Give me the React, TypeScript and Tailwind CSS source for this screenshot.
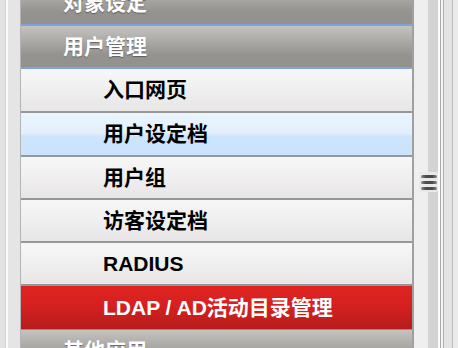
import React from 'react'

type Item = {
  label: string
  kind: 'header' | 'item' | 'active' | 'current'
  h: string
}

// heights include the bottom border (border-box)
const items: Item[] = [
  { label: '对象设定', kind: 'header', h: 'h-[44px]' },
  { label: '用户管理', kind: 'header', h: 'h-[43px]' },
  { label: '入口网页', kind: 'item', h: 'h-[44px]' },
  { label: '用户设定档', kind: 'current', h: 'h-[44px]' },
  { label: '用户组', kind: 'item', h: 'h-[43px]' },
  { label: '访客设定档', kind: 'item', h: 'h-[43px]' },
  { label: 'RADIUS', kind: 'item', h: 'h-[43px]' },
  { label: 'LDAP / AD活动目录管理', kind: 'active', h: 'h-[44px]' },
  { label: '其他应用', kind: 'header', h: 'h-[44px]' },
]

const font = { fontFamily: '"Liberation Sans", "Noto Sans CJK SC", sans-serif' }

function Row({ item }: { item: Item }) {
  if (item.kind === 'header') {
    return (
      <div
        className={`${item.h} flex shrink-0 items-center border-b-2 border-[#7fa2e4] bg-[linear-gradient(to_bottom,#c5c3c0,#a3a19e_50%,#959390_70%,#93918e)] pl-[42px] text-[21px] font-bold text-white [text-shadow:0_1px_1px_rgba(60,60,60,0.6)]`}
      >
        {item.label}
      </div>
    )
  }
  if (item.kind === 'active') {
    return (
      <div
        className={`${item.h} flex shrink-0 items-center border-b border-[#8f8f8f] bg-[linear-gradient(to_bottom,#de2420,#d62020_45%,#b61d1d)] pl-[82px] text-[21px] font-bold text-white`}
      >
        {item.label}
      </div>
    )
  }
  const bg =
    item.kind === 'current'
      ? 'bg-[linear-gradient(to_bottom,#eaf5fd,#e2f0fc_48%,#cde4fc_55%,#cbe3fc)]'
      : 'bg-[linear-gradient(to_bottom,#f7f7f7,#f1f0f0_45%,#e7e5e5)]'
  return (
    <div
      className={`${item.h} ${bg} flex shrink-0 items-center border-b-2 border-[#979797] pl-[82px] text-[21px] font-bold text-black`}
    >
      {item.label}
    </div>
  )
}

export default function App() {
  return (
    <div className="flex h-[348px] w-[458px] overflow-hidden bg-[#e6e6e6]" style={font}>
      {/* left frame */}
      <div className="flex h-full w-[21px] shrink-0">
        <div className="w-[5px] bg-[#e2e2e2]" />
        <div className="w-px bg-[#d2d2d2]" />
        <div className="w-[2px] bg-[#fafafa]" />
        <div className="flex-1 bg-[#e5e5e5]" />
        <div className="w-px bg-[#b4b4b4]" />
      </div>

      {/* menu */}
      <div className="flex h-full w-[393px] shrink-0 flex-col border-r-2 border-[#a0a0a0]">
        <div className="-mt-[18px] flex flex-col">
          {items.map((item, i) => (
            <Row key={i} item={item} />
          ))}
        </div>
      </div>

      {/* scrollbar */}
      <div className="flex h-full flex-1">
        <div className="relative w-[14px] bg-[#efefef]">
          <div className="absolute left-[5px] top-[172px] flex h-[20px] w-[19px] flex-col items-center justify-center gap-[3px] rounded-[2px] bg-[#e9e9e9]">
            <span className="h-[3px] w-[16px] rounded-full bg-[linear-gradient(to_right,#8a8a8a,#4a4a4a_30%,#4a4a4a_70%,#8a8a8a)]" />
            <span className="h-[3px] w-[16px] rounded-full bg-[linear-gradient(to_right,#8a8a8a,#4a4a4a_30%,#4a4a4a_70%,#8a8a8a)]" />
            <span className="h-[3px] w-[16px] rounded-full bg-[linear-gradient(to_right,#8a8a8a,#4a4a4a_30%,#4a4a4a_70%,#8a8a8a)]" />
          </div>
        </div>
        <div className="w-[10px] bg-[#d3d3d3]" />
        <div className="w-[2px] bg-[#fbfbfb]" />
        <div className="w-px bg-[#a9a9a9]" />
        <div className="w-[2px] bg-[#f4f4f4]" />
        <div className="w-px bg-[#b0b0b0]" />
        <div className="w-[8px] bg-[#e3e3e3]" />
        <div className="w-px bg-[#bdbdbd]" />
        <div className="flex-1 bg-[#ebebeb]" />
      </div>
    </div>
  )
}
